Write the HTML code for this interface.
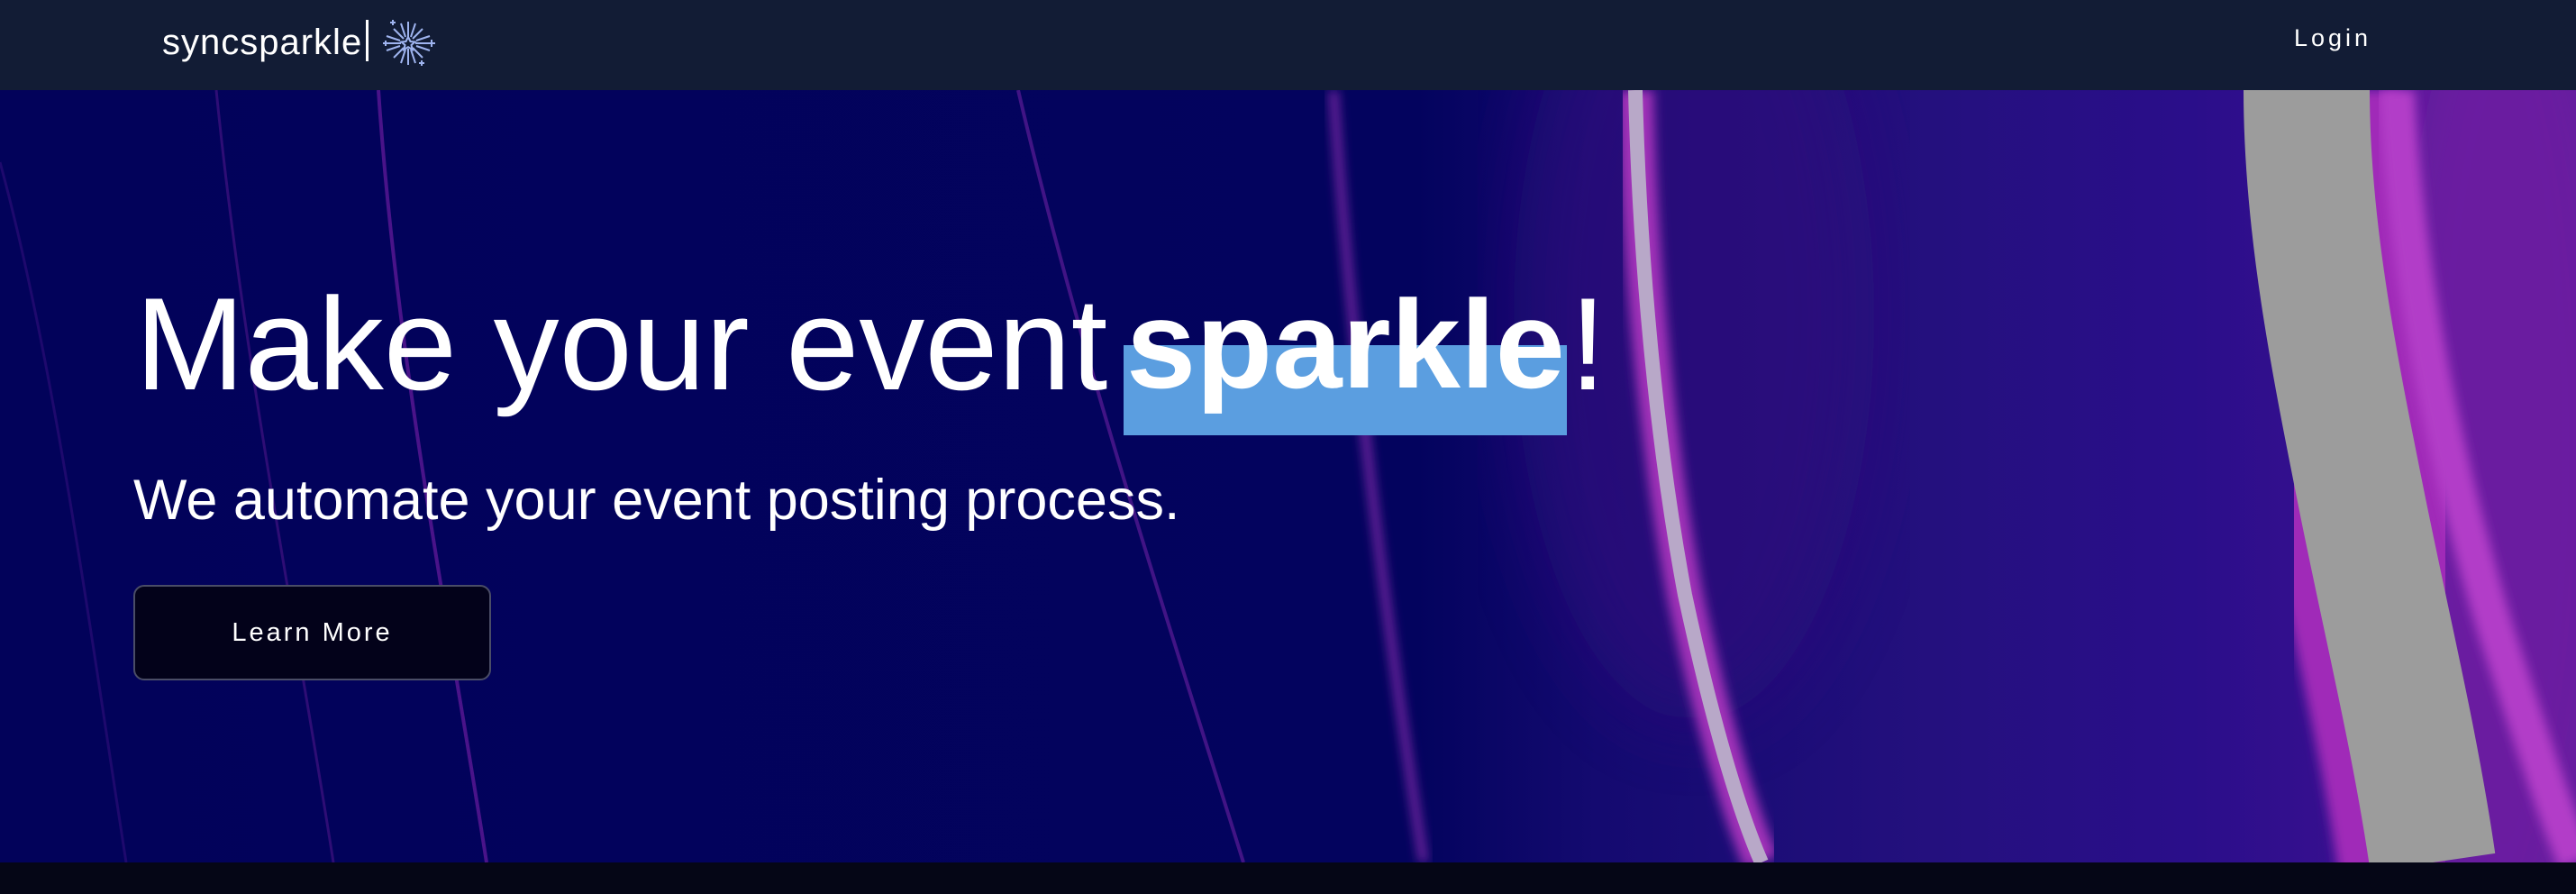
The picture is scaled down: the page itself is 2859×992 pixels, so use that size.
<!DOCTYPE html>
<html><head><meta charset="utf-8"><style>
*{margin:0;padding:0;box-sizing:border-box}
html,body{width:2859px;height:992px;overflow:hidden}
body{background:#050616;font-family:"Liberation Sans",sans-serif;position:relative}
.nav{position:absolute;left:0;top:0;width:2859px;height:100px;background:#121c35}
.logo{position:absolute;left:180px;top:22px;color:#fff;font-size:40px;letter-spacing:1px}
.login{position:absolute;left:2546px;top:27px;color:#fff;font-size:27px;letter-spacing:4px}
.hero{position:absolute;left:0;top:100px;width:2859px;height:857px;background:linear-gradient(90deg,#02025a 0%,#03035e 55%,#140a70 62%,#24107e 75%,#2a0e8a 85%,#4a1296 100%);overflow:hidden}
.t{position:absolute;color:#fff;white-space:nowrap;line-height:1}
.hl{position:absolute;left:1247px;top:383px;width:492px;height:100px;background:#5b9ee0}
.sub{position:absolute;left:148px;top:524px;color:#fff;font-size:63px;white-space:nowrap;line-height:1}
.btn{position:absolute;left:148px;top:649px;width:397px;height:106px;background:#03021a;border:2px solid #4a4d66;border-radius:12px;color:#fff;font-size:29px;letter-spacing:3px;text-align:center;line-height:102px}
</style></head><body>
<div class="nav">
<div class="logo">syncsparkle<span style="display:inline-block;width:3px;height:46px;background:#fff;vertical-align:-8px;margin-left:4px"></span></div>
<svg style="position:absolute;left:423px;top:20px" width="60" height="56" viewBox="0 0 60 56" stroke="#9fb4ef" stroke-width="2" fill="none">
<path d="M30 4v18M30 34v18M8 28h14M38 28h14M14 12l11 11M35 33l11 11M46 12L35 23M25 33L14 44M22 6l5 15M38 6l-5 15M22 50l5-15M38 50l-5-15M6 20l15 5M54 20l-15 5M6 36l15-5M54 36l-15-5"/>
<path d="M30 21l2.5 5 5 .5-4 3.5 1.2 5-4.7-2.8-4.7 2.8 1.2-5-4-3.5 5-.5z"/>
<path d="M52 28h8M56 24v8M2 28h6M5 25v6M10 5h6M13 2v6M42 50h6M45 47v6"/>
</svg>
<div class="login">Login</div>
</div>
<div class="hero">
<svg width="2859" height="857" style="position:absolute;left:0;top:0" fill="none">
<defs><filter id="b"><feGaussianBlur stdDeviation="6"/></filter><filter id="b2"><feGaussianBlur stdDeviation="40"/></filter></defs>
<ellipse cx="1880" cy="250" rx="200" ry="450" fill="#32107e" filter="url(#b2)" opacity=".6"/>
<ellipse cx="2780" cy="400" rx="160" ry="600" fill="#6a1aa0" filter="url(#b2)"/>
<path d="M1815 0 C1820 200 1840 400 1870 560 C1900 700 1930 800 1955 857" stroke="#a030b8" stroke-width="40" filter="url(#b)"/>
<path d="M1815 0 C1820 200 1840 400 1870 560 C1900 700 1930 800 1955 857" stroke="#b8a8c8" stroke-width="16"/>
<path d="M2560 0 C2560 150 2590 300 2620 450 C2650 600 2680 720 2700 857" stroke="#a02cb8" stroke-width="210" filter="url(#b)"/>
<path d="M2560 0 C2560 150 2590 300 2620 450 C2650 600 2680 720 2700 857" stroke="#9c9c9c" stroke-width="140"/>
<path d="M2660 0 C2670 200 2710 400 2770 600 C2810 720 2835 800 2859 857" stroke="#b23cc8" stroke-width="40" filter="url(#b)"/>
<path d="M1480 0 C1500 300 1540 600 1580 857" stroke="#8a2ab0" stroke-width="8" filter="url(#b)"/>
<path d="M1130 0 C1200 300 1300 600 1380 857" stroke="#6a1fa0" stroke-width="4" opacity=".6"/>
<path d="M420 0 C440 300 500 600 540 857" stroke="#7a1fa8" stroke-width="4" opacity=".6"/>
<path d="M240 0 C270 300 330 600 370 857" stroke="#5a1890" stroke-width="3" opacity=".5"/>
<path d="M0 80 C60 300 100 600 140 857" stroke="#3a1080" stroke-width="3" opacity=".5"/>
</svg>
</div>
<div class="hl"></div>
<div class="t" style="left:150px;top:309px;font-size:146px">Make your event</div>
<div class="t" style="left:1250px;top:313px;font-size:139px;font-weight:bold">sparkle</div>
<div class="t" style="left:1742px;top:309px;font-size:146px">!</div>
<div class="sub">We automate your event posting process.</div>
<div class="btn">Learn More</div>
</body></html>
